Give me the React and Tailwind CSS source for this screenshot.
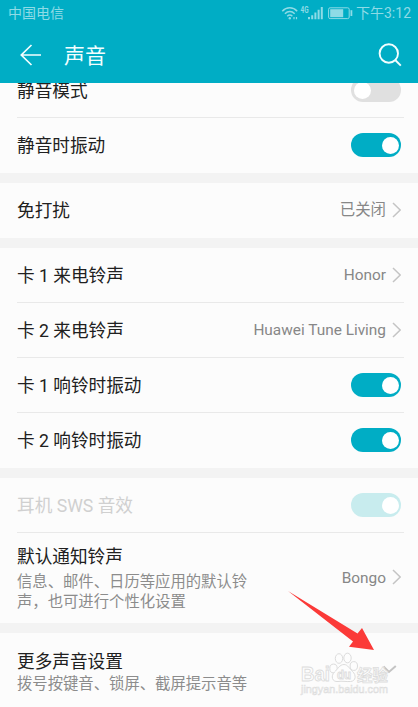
import React from 'react';

const Toggle = ({ on, disabled }) => (
  <div className={`w-[50px] h-6 rounded-full flex items-center shrink-0 ${
    on ? (disabled ? 'bg-[#c8ecee] justify-end pr-[2.5px]' : 'bg-[#00adc5] justify-end pr-[2.5px]') : 'bg-[#e0e0e0] pl-[2.5px]'
  }`}>
    <div className="w-[17px] h-[17px] rounded-full bg-white"></div>
  </div>
);

const Chevron = () => (
  <svg width="9" height="17" viewBox="0 0 9 17" fill="none" stroke="#c4c4c4" strokeWidth="1.5" className="shrink-0">
    <path d="M1 1L8.2 8L1 15" />
  </svg>
);

const Value = ({ children }) => (
  <div className="flex items-center gap-[6px]">
    <span className="text-[15.4px] leading-5 text-[#878787]">{children}</span>
    <Chevron />
  </div>
);

const Row = ({ title, desc, height = 'h-[55px]', descGap = '', divider, muted, children }) => (
  <div className={`pl-[17px] pr-[14px] ${height}`}>
    <div className={`h-full flex items-center justify-between pr-[3px] border-b ${divider ? 'border-[#e9e9e9]' : 'border-transparent'}`}>
      <div className="whitespace-nowrap pt-[2px]">
        <div className={`text-[17.65px] leading-6 ${muted ? 'text-[#d0d0d0]' : 'text-[#202020]'}`}>{title}</div>
        {desc && (
          <div className={`text-[15.35px] leading-[20.5px] text-[#8c8c8c] ${descGap}`}>
            {desc.map(line => <div key={line}>{line}</div>)}
          </div>
        )}
      </div>
      {children}
    </div>
  </div>
);

const Gap = () => <div className="h-[10px] bg-[#f3f3f3]"></div>;

const StatusBar = () => (
  <div className="h-[26px] pl-2 pr-[7px] flex items-center justify-between text-[14px] leading-5 text-[#8edbe6]">
    <span>中国电信</span>
    <div className="flex items-center">
      <svg width="74" height="16" viewBox="0 0 74 16" fill="none" stroke="#8edbe6" className="mr-[2px]">
        {/* wifi */}
        <path d="M1.3 6.2C5.5 1.6 12 1.6 16.2 6.2M3.9 8.8C6.8 5.8 10.8 5.8 13.7 8.8M6.2 11.2C7.8 9.8 9.8 9.8 11.4 11.2" strokeWidth="1.5" />
        <circle cx="8.8" cy="13.2" r="1.2" fill="#8edbe6" stroke="none" />
        <path d="M13 12V14.2M15.5 12V14.2" strokeWidth="1.2" />
        <text x="19.5" y="8" fill="#8edbe6" stroke="none" fontSize="8.5" fontWeight="700" textLength="8" lengthAdjust="spacingAndGlyphs">4G</text>
        {/* signal bars */}
        <path d="M28 14.2V12M31.2 14.2V10.2M34.4 14.2V7.6M37.6 14.2V4.8M40.8 14.2V2" strokeWidth="2" />
        {/* battery */}
        <rect x="47.6" y="2.8" width="20.6" height="10.8" rx="1.5" />
        <rect x="49.2" y="4.2" width="13" height="8" fill="#8edbe6" stroke="none" />
        <path d="M70.4 5.2V11" strokeWidth="1.8" />
      </svg>
      <span className="w-[54px] whitespace-nowrap flex justify-end">下午3:12</span>
    </div>
  </div>
);

const Header = () => (
  <div className="h-[83px] bg-[#00adc5] relative z-10">
    <StatusBar />
    <div className="h-[57px] pl-[20px] pr-[16px] flex items-center">
      <svg width="22" height="22" viewBox="0 0 22 22" fill="none" stroke="#f2feff" strokeWidth="1.7">
        <path d="M11.5 1L1.3 11L11.5 21M1.3 11H21" />
      </svg>
      <span className="ml-[22px] text-[21px] leading-7 text-[#f2feff] relative top-px">声音</span>
      <svg width="24" height="24" viewBox="0 0 24 24" fill="none" stroke="#f2feff" strokeWidth="1.9" className="ml-auto">
        <circle cx="10.8" cy="10.5" r="9.2" />
        <path d="M17.2 17L22.8 22.6" />
      </svg>
    </div>
  </div>
);

const Watermark = () => (
  <svg width="108" height="48" viewBox="0 0 108 48" className="absolute left-[296px] top-[650px]" fill="#fdfdfd" stroke="#dcdcdc" strokeWidth="1">
    <g fontFamily="Liberation Sans, Noto Sans CJK SC, sans-serif">
      <text x="5" y="31" fontSize="20" fontWeight="700" strokeWidth="0.9" textLength="29" lengthAdjust="spacingAndGlyphs">Bai</text>
      <ellipse cx="37.5" cy="18.5" rx="3.7" ry="4.4" />
      <ellipse cx="43" cy="8.5" rx="3.7" ry="4.8" />
      <ellipse cx="51.5" cy="8" rx="3.7" ry="4.8" />
      <ellipse cx="57.8" cy="16" rx="3.7" ry="4.4" />
      <path d="M48 14.5C52 14.5 53.5 19 56.5 21.5C60.5 25 60 31.2 54.5 31.5C50 31.8 46 30.8 42 31.5C36 32.2 34.5 26 38.5 22C41.5 19.5 43.5 14.5 48 14.5Z" />
      <text x="41" y="29" fontSize="12" fontWeight="700" strokeWidth="0.9" textLength="14" lengthAdjust="spacingAndGlyphs">du</text>
      <text x="61" y="31" fontSize="16" fontWeight="700" strokeWidth="0.8" textLength="31" lengthAdjust="spacingAndGlyphs">经验</text>
      <text x="5" y="43" fontSize="11" strokeWidth="0.6" textLength="87" lengthAdjust="spacingAndGlyphs">jingyan.baidu.com</text>
    </g>
  </svg>
);

const Pointer = () => (
  <svg width="88" height="62" viewBox="0 0 88 62" className="absolute left-[287px] top-[590px]" fill="#fb3a38">
    <path d="M1 1L70.5 43.5L75 38L87 60L62 56.8L66 51.5Z" />
  </svg>
);

export default function App() {
  return (
    <div className="relative w-[418px] h-[707px] overflow-hidden bg-[#fcfcfc] font-[Roboto,'Noto_Sans_CJK_SC',sans-serif]">
      <Header />

      <div className="-mt-[20px]">
        <Row title="静音模式" divider><Toggle /></Row>
        <Row title="静音时振动"><Toggle on /></Row>
        <Gap />
        <Row title="免打扰"><Value>已关闭</Value></Row>
        <Gap />
        <Row title="卡 1 来电铃声" divider><Value>Honor</Value></Row>
        <Row title="卡 2 来电铃声" divider><Value>Huawei Tune Living</Value></Row>
        <Row title="卡 1 响铃时振动" divider><Toggle on /></Row>
        <Row title="卡 2 响铃时振动"><Toggle on /></Row>
        <Gap />
        <Row title="耳机 SWS 音效" divider muted><Toggle on disabled /></Row>
        <Row
          title="默认通知铃声"
          desc={['信息、邮件、日历等应用的默认铃', '声，也可进行个性化设置']}
          height="h-[90px]"
          descGap="pt-[3px]"
        >
          <Value>Bongo</Value>
        </Row>
        <Gap />
        <Row title="更多声音设置" desc={['拨号按键音、锁屏、截屏提示音等']} height="h-[77px]">
          <svg width="15" height="9" viewBox="0 0 15 9" fill="none" stroke="#c4c4c4" strokeWidth="2" className="mr-[4px] mb-[4px]">
            <path d="M1.5 1.5L7 7L13.8 1" />
          </svg>
        </Row>
      </div>

      <Watermark />
      <Pointer />
    </div>
  );
}
